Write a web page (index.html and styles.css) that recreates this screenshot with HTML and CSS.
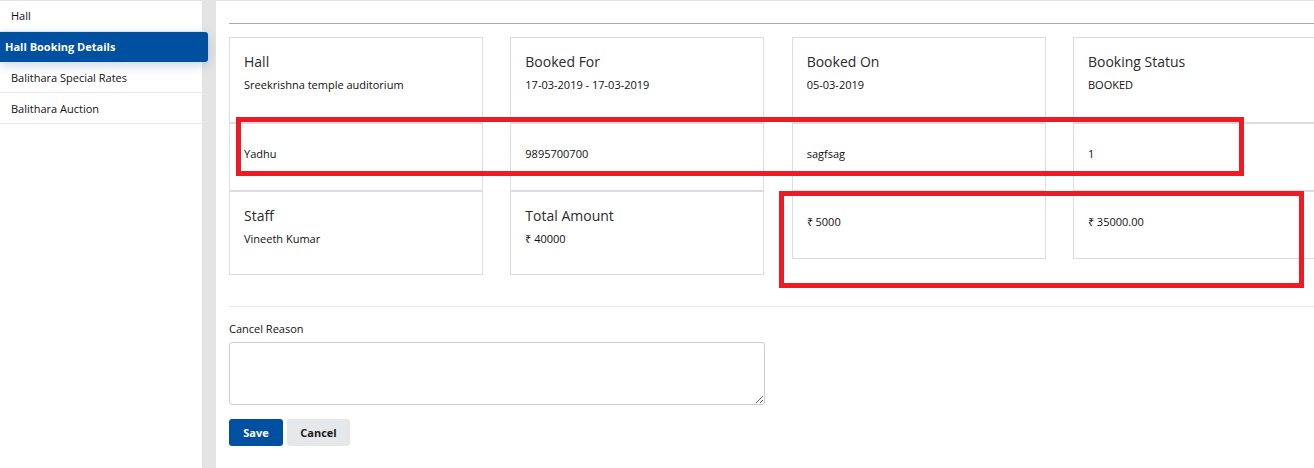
FILE: index.html
```html
<!DOCTYPE html>
<html lang="en">
<head>
<meta charset="utf-8">
<title>Hall Booking Details</title>
<link rel="stylesheet" href="styles.css">
</head>
<body>
<div class="layout">
  <aside class="sidebar">
    <nav class="menu">
      <a class="menu-item" href="#">Hall</a>
      <a class="menu-item active" href="#">Hall Booking Details</a>
      <a class="menu-item" href="#">Balithara Special Rates</a>
      <a class="menu-item" href="#">Balithara Auction</a>
    </nav>
  </aside>
  <main class="main">
    <div class="content">
      <div class="details">
        <div class="card"><div class="label">Hall</div><div class="value">Sreekrishna temple auditorium</div></div>
        <div class="card"><div class="label">Booked For</div><div class="value">17-03-2019 - 17-03-2019</div></div>
        <div class="card"><div class="label">Booked On</div><div class="value">05-03-2019</div></div>
        <div class="card"><div class="label">Booking Status</div><div class="value">BOOKED</div></div>

        <div class="card card-plain"><div class="value">Yadhu</div></div>
        <div class="card card-plain"><div class="value">9895700700</div></div>
        <div class="card card-plain"><div class="value">sagfsag</div></div>
        <div class="card card-plain"><div class="value">1</div></div>

        <div class="card card-last"><div class="label">Staff</div><div class="value">Vineeth Kumar</div></div>
        <div class="card card-last"><div class="label">Total Amount</div><div class="value">₹ 40000</div></div>
        <div class="card card-plain"><div class="value">₹ 5000</div></div>
        <div class="card card-plain"><div class="value">₹ 35000.00</div></div>
      </div>

      <div class="cancel-form">
        <label class="field-label" for="reason">Cancel Reason</label>
        <textarea id="reason" class="field-textarea"></textarea>
        <div class="actions">
          <button class="btn btn-primary" type="button">Save</button>
          <button class="btn btn-secondary" type="button">Cancel</button>
        </div>
      </div>
    </div>
  </main>
</div>
<div class="mark mark-one"></div>
<div class="mark mark-two"></div>
</body>
</html>
```
FILE: styles.css
```css
* { box-sizing: border-box; }

html, body {
  margin: 0;
  height: 468px;
  overflow: hidden;
}

body {
  position: relative;
  background: #e4e4e4;
  font-family: "Open Sans", "Liberation Sans", Arial, sans-serif;
  color: #1a1a1a;
}

.layout {
  display: flex;
  gap: 14px;
  height: 468px;
  padding-top: 1px;
}

.sidebar {
  width: 202px;
  flex: 0 0 202px;
  background: #fff;
}

.menu {
  display: flex;
  flex-direction: column;
}

.menu-item {
  display: block;
  height: 31px;
  line-height: 31px;
  padding-left: 11px;
  font-size: 11px;
  color: #111;
  text-decoration: none;
  border-bottom: 1px solid #e9e9ec;
}

.menu-item:first-child {
  height: 31px;
  line-height: 30px;
}

.menu-item.active {
  width: 208px;
  height: 30px;
  line-height: 30px;
  padding-left: 5px;
  background: #0050a1;
  color: #fff;
  font-weight: 700;
  border-bottom: none;
  border-radius: 0 3px 3px 0;
  box-shadow: 0 3px 12px rgba(0, 60, 140, 0.22);
}

.main {
  flex: 1;
  background: #fff;
  overflow: hidden;
}

.content {
  margin-left: 13px;
  padding-top: 22px;
  width: 1200px;
}

.details {
  border-top: 1px solid #ababab;
  padding-top: 13px;
  display: grid;
  grid-template-columns: repeat(4, 254px);
  column-gap: 27.33px;
  align-items: start;
}

.card {
  border: 1px solid #dcdde2;
  padding: 14px 14px 29px;
}

.card-last {
  padding-bottom: 27px;
}

.card-plain {
  padding: 22px 14px 28px;
}

.label {
  font-size: 14px;
  line-height: 20px;
  color: #2b2b2b;
  margin-bottom: 5px;
}

.value {
  font-size: 11px;
  line-height: 16px;
  font-weight: 500;
  color: #111;
}

.cancel-form {
  margin-top: 31px;
  border-top: 1px solid #e6e6e8;
  padding-top: 14px;
  display: flex;
  flex-direction: column;
  align-items: flex-start;
}

.field-label {
  font-size: 11px;
  line-height: 16px;
  color: #111;
}

.field-textarea {
  margin-top: 5px;
  width: 536px;
  height: 63px;
  border: 1px solid #c9cdd2;
  border-radius: 3px;
  font-family: inherit;
}

.actions {
  margin-top: 14px;
  display: flex;
  gap: 4px;
}

.btn {
  height: 27px;
  border: none;
  border-radius: 3px;
  font-family: inherit;
  font-size: 11px;
  font-weight: 700;
  padding: 0;
}

.btn-primary {
  width: 54px;
  background: #0050a1;
  color: #fff;
}

.btn-secondary {
  width: 63px;
  background: #e4e8eb;
  color: #1a1a1a;
}

.mark {
  position: absolute;
  border: 5px solid #ed1c24;
  pointer-events: none;
}

.mark-one {
  left: 236px;
  top: 117px;
  width: 1008px;
  height: 59px;
}

.mark-two {
  left: 779px;
  top: 191px;
  width: 525px;
  height: 97px;
}
```
